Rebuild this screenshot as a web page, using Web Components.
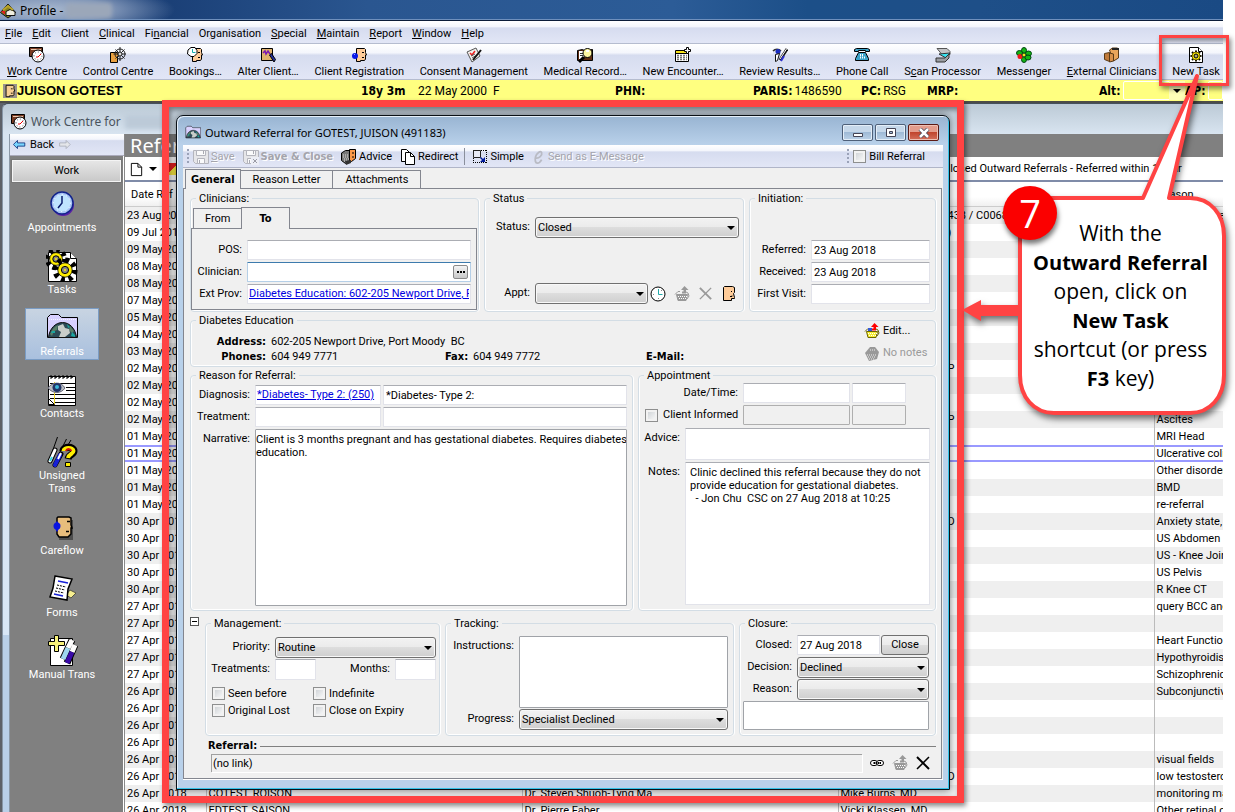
<!DOCTYPE html>
<html lang="en">
<head>
<meta charset="utf-8">
<title>Profile - Outward Referral</title>
<style>
  html, body { height: 100%; margin: 0; }
  body {
    --bold: "DejaVu Sans Condensed", "DejaVu Sans", sans-serif;
    --caption: "Noto Sans", sans-serif;
    --bar: linear-gradient(#fff 0, #f4f6fc 25%, #d6dcef 32%, #e2e6f6 100%);
    --red: #ff4343;
    font: 11px/14px Roboto, sans-serif;
    color: #000;
    background: #fff;
    position: relative;
    overflow: hidden;
  }
</style>
</head>
<body>
<profile-app></profile-app>
<guide-notes></guide-notes>

<script>
const define = (name, markup, setup) => {
  const template = document.createElement('template');
  template.innerHTML = markup;
  customElements.define(name, class extends HTMLElement {
    connectedCallback() {
      if (this.shadowRoot) return;
      const root = this.attachShadow({ mode: 'open' });
      root.append(template.content.cloneNode(true));
      if (setup) setup.call(this, root);
    }
  });
};

/* ---------- icons ---------- */
const face = (x, y, c = '#fc9') =>
  `<g transform="translate(${x} ${y})"><path fill="${c}" stroke="#000" d="M1.5.5h8l1 1v3l1 2.5h-1v4l-1 1.5h-4v1h-4z"/><path stroke="#000" d="M7 4.5h2M7 9.5h2"/></g>`;
const clock = (x, y, r, hand = '#e00') =>
  `<circle cx="${x}" cy="${y}" r="${r}" fill="#fff" stroke="#000"/><path stroke="#556" stroke-dasharray="1 2" fill="none" d="M${x - r + 2} ${y}a${r - 2} ${r - 2} 0 1 1 ${2 * r - 4} 0a${r - 2} ${r - 2} 0 1 1 ${4 - 2 * r} 0"/><path stroke="${hand}" fill="none" d="M${x - 2} ${y + 1}h2l3-3"/>`;
const gear = (x, y, r, c = '#fe0') =>
  `<circle cx="${x}" cy="${y}" r="${r}" fill="none" stroke="#000" stroke-width="${r * .8}" stroke-dasharray="${r * .4} ${r * .385}"/><circle cx="${x}" cy="${y}" r="${r * .8}" fill="${c}" stroke="#000" stroke-width=".8"/><circle cx="${x}" cy="${y}" r="${r * .4}" fill="#888" stroke="#000"/><circle cx="${x}" cy="${y}" r="1" fill="${c}"/>`;
const basket = (body, edge, arrow) =>
  `<path fill="${body}" stroke="${edge}" d="M2.5 8.5h11l-1.5 6h-8z"/><path stroke="${edge}" fill="none" d="M1 8.5l3-3h2M10 5l4 2 1 3-2 3"/><path stroke="#fff" stroke-dasharray="1 1" d="M4 10.5h9M5 12.5h7"/><path fill="${arrow}" d="M10.5 0l4 4h-2.5v3.5h-4v-2h1.5v-1.5h-2.5z"/>`;
const earthFolder = `<path fill="#d8d0ff" stroke="#000" d="M1.5 25.5v-20l3-3h8l3 3h16v20z"/><path fill="#c3bfe8" stroke="#f4f4ff" stroke-dasharray="1 1" d="M3 7.5h27"/><path fill="#2d4a56" stroke="#111" d="M2.5 25.5c1-9 7-15 14-15s13 6 14 15z"/><path fill="#5b8067" d="M4 22c2-5 5-8 8-9l-1 5-3 1-2 5zM24 14l4 5-2 2-3-3z"/><path fill="#c9cdc9" d="M12 14l5-2 2 4 4 1 1 4-5 4h-6l2-5-3-2z"/><path fill="#1aa6a0" d="M21 12l3 3-2 1zM26 20l3 3v2l-4-1zM6 19h3v2h-4z"/>`;
const floppy = `<path fill="#e6e6e9" stroke="#b4b5bd" d="M.5 1.5h15v13h-13l-2-2z"/><path fill="#fafafb" stroke="#b4b5bd" d="M3.5 1.5h9v5h-9zM4.5 9.5h7v5h-7z"/><path stroke="#a9aab2" d="M10.5 2v3M6.5 11v3"/>`;

const icons = {
  app: [16, `<path fill="#8a8420" stroke="#111" d="M.5 9.5L8 1l7.5 8.5L8 15z"/><path fill="#f1efe0" stroke="#111" d="M6 8.5l4-2 5 2v4H6z"/><path fill="#e21c1c" d="M1 8h4v3H4z"/><path stroke="#b9a42a" stroke-width="2" d="M3 7l5-4 5 4"/>`],
  workcentre: [16, `<path fill="#7a3b22" stroke="#000" d="M.5.5h13v9h-13z"/><path stroke="#e8c8b0" d="M2 2.5h10"/>${clock(9, 9, 6)}`],
  control: [16, `<path fill="#e8a040" stroke="#000" d="M.5 5.5h7l1 4h-1v6h-7z"/><path fill="none" stroke="#222" d="M10 2a5 5 0 1 1 0 10a5 5 0 1 1 0-10M10 0v14M3.5 7H16M5.5 2.5l9 9M14.5 2.5l-9 9"/><circle cx="10" cy="7" r="2" fill="#ddd" stroke="#222"/>`],
  bookings: [16, `${face(4, 1)}<path fill="#fff" stroke="#000" d="M1 3l3-2.5h4l2 3v3l-3 3H4L.5 7z"/><path stroke="#18b0b0" fill="none" d="M5.5 2v3.5h3"/>`],
  alter: [16, `<path fill="#deb36c" stroke="#000" d="M1.5 1.5h11v12h-11z"/><path fill="none" stroke="#7a18b0" stroke-width="1.5" d="M3 6l2-2 1 3 2-3 2 3"/><path fill="#24309c" stroke="#000" d="M9.5 8l2-1.5 4 6-1.5 2.5z"/>`],
  register: [16, `${face(4, 1)}<circle cx="4" cy="9" r="3" fill="#0a18e8"/><path fill="#8ca0ff" d="M3 7h1v1H3z"/>`],
  consent: [16, `<path fill="#f2f2ee" stroke="#555" d="M1 5l9-4 4 8-8 6z"/><path stroke="#e22" stroke-width="1.5" fill="none" d="M4 6l2 2 3-4"/><path stroke="#555" d="M6 11l5-3M5 9l4-2"/><path stroke="#111" stroke-width="2" d="M7 13l8-10"/>`],
  record: [16, `<path fill="#5f2c12" stroke="#000" d="M.5 3.5l5-1 2 1 8-1v11h-15z"/><path fill="#fff" d="M2 4h5v8H2z"/><path stroke="#333" d="M3 6.5h3M3 8.5h3"/><circle cx="10.5" cy="6" r="4.5" fill="#fdf6a0" stroke="#000"/><path stroke="#000" stroke-width="3" d="M7 10l-5 5"/><path fill="#fff" d="M9 3h3v2H9z"/>`],
  encounter: [16, `<path fill="#fff" stroke="#000" d="M.5 3.5h13v11h-13z"/><path fill="#f6e21a" d="M1 4h12v2H1z"/><path stroke="#777" stroke-width="1.5" stroke-dasharray="2 1" d="M2 8.5h10M2 10.5h10M2 12.5h10"/><path stroke="#000" d="M1 6.5h12"/><path fill="#fff" stroke="#000" d="M11.5.5h2v2h2v2h-2v2h-2v-2h-2v-2h2z"/>`],
  results: [16, `<path fill="#dfe3f2" d="M1 4h8v4H1z"/><path fill="none" stroke="#333" stroke-width="1.5" d="M1 4c2-2.5 6-2.5 8 0"/><circle cx="6" cy="4.5" r="2.5" fill="#1a2cc0"/><path stroke="#111" stroke-width="3" d="M15 2L8 13"/><path stroke="#fff" d="M14.5 2L8 12"/><path stroke="#2b2fd0" stroke-width="2" d="M9 14l3-5"/><path stroke="#111" fill="#fff" d="M3.5 7.5l4-1-2 7-2 1z"/>`],
  phone: [16, `<path fill="#3ba2c8" stroke="#000" d="M.5 4.5v-2l2-1h11l2 1v2h-4v-1h-7v1z"/><path fill="#3ba2c8" stroke="#000" d="M4.5 5.5h7l3 6v2h-13v-2z"/><path stroke="#fff" stroke-width="2" stroke-dasharray="1 1" d="M6 8h4M6 10.5h5"/>`],
  scanner: [16, `<path fill="#c2c4c6" stroke="#555" d="M2 1.5h10l3 3v3l-8 0z"/><path fill="#37e3f0" stroke="#333" d="M4 7l11-1-4 5z"/><path fill="#9a9da2" stroke="#333" d="M1 11h9l4-4v4l-4 4H1z"/>`],
  messenger: [16, `<g fill="#14b414" stroke="#041"><ellipse cx="8" cy="3.5" rx="2.5" ry="3"/><ellipse cx="8" cy="12.5" rx="2.5" ry="3"/><ellipse cx="12.5" cy="6.5" rx="3" ry="2.5"/><ellipse cx="3.5" cy="6" rx="3" ry="2.5"/><ellipse cx="12" cy="10.5" rx="3" ry="2.5"/></g><circle cx="4" cy="9.5" r="2.5" fill="#f01818"/><circle cx="8" cy="8" r="2" fill="#f7e620" stroke="#041"/>`],
  clinicians: [16, `<path fill="#e9a55b" stroke="#5a3a16" d="M5.5 3l3-2h5l1 2v8l-5 3z"/><path stroke="#222" stroke-width="2" d="M8 2h7"/><path fill="#c07a3a" stroke="#5a3a16" d="M.5 6.5l5-1v9l-5-2z"/><path fill="#d8904a" stroke="#5a3a16" d="M5.5 6l4 1v7l-4 1z"/>`],
  task: [16, `<path fill="#fff" stroke="#000" d="M1.5.5h9l4 4v11h-13z"/><path fill="#fff" stroke="#000" d="M10.5.5v4h4"/><g stroke="#000" stroke-width="1"><path stroke-width="2" d="M8 3.500v11M2.500 9h11M4 5l8 8M12 5l-8 8"/></g><circle cx="8" cy="9" r="4" fill="#fe0" stroke="#776800"/><circle cx="8" cy="9" r="2" fill="#999" stroke="#000"/><path fill="#fe0" d="M7.500 8.500h1v1h-1z"/>`],
  patient: [16, `<path fill="#9a948c" d="M0 0h16v16H0z"/>${face(2, 1, '#f7cf94')}`],
  folder: [32, earthFolder],
  referrals: [32, earthFolder],
  back: [16, `<path fill="#7ad7ff" stroke="#0a2a78" d="M.5 8l5-5v3h9v4h-9v3z"/>`],
  forward: [16, `<path fill="#e4e6ea" stroke="#a9adb6" d="M15 8l-5-5v3H2v4h8v3z"/>`],
  page: [16, `<path fill="#fff" stroke="#000" d="M2.5 1.5h7l4 4v9h-11z"/><path fill="none" stroke="#000" d="M9.5 1.5v4h4"/>`],
  copy: [16, `<path fill="#fff" stroke="#000" d="M1.5.5h5l3 3v9h-8z"/><path fill="#fff" stroke="#000" d="M5.5 3.5h5l4 4v8h-9z"/><path fill="none" stroke="#000" d="M10.5 3.5v4h4"/>`],
  floppy: [16, floppy],
  floppyx: [16, floppy + `<path fill="#eceef6" d="M8 8h8v8H8z"/><path stroke="#9a9ba5" d="M10 10l4 4M14 10l-4 4"/>`],
  advice: [16, `<path fill="#777" stroke="#000" d="M.5 4l4-2.5h4v11l-4 2-4-3z"/><path stroke="#ddd" stroke-dasharray="1 1" d="M2 6h5M2 8h5M3 10h5M3 12h4"/><path fill="#fc9a4a" stroke="#000" d="M8.5.5h6v9l-4 3h-2z"/><path stroke="#000" d="M11 4h2M11 8h2"/><path fill="#333" d="M4 12l6-1v3l-5 2z"/>`],
  simple: [16, `<path fill="none" stroke="#000" stroke-dasharray="1 1" d="M1 1.5h14M14.5 1v13M1.5 1v13M1 13.5h14"/><path fill="#e6e9f5" stroke="#222" d="M1.5 1.5h7v7h-7z"/><path fill="#001a9a" d="M13 8v5H8l2-2-2-2 1-1 2 2z"/>`],
  email: [16, `<path fill="none" stroke="#b9bbc4" stroke-width="2" d="M4 9c4 1 8-3 7-6S5 4 4 8s0 7 2 7 4-2 5-4"/>`],
  schedule: [16, `<circle cx="8" cy="8" r="7" fill="#fff" stroke="#000"/><path fill="none" stroke="#2aa" d="M8.5 3v5.5h4"/><path stroke="#888" d="M3 8.5h1M8.5 12v1M12 4l-1 1"/>`],
  basketgrey: [16, basket('#999', '#999', '#999')],
  basket: [16, basket('#f7ee33', '#6a6400', '#f00') + `<path fill="#3358d8" d="M4 5h4v3H4z"/><path stroke="#f7ee33" stroke-dasharray="1 1" d="M4 11.5h8"/>`],
  notes: [16, `<path fill="#999" d="M1 8l5-6h5l4 5-2 7-8 2z"/><path stroke="#eee" stroke-dasharray="1 1" d="M3 10h9M4 12h8M5 14h6M6 5h5"/>`],
  crossgrey: [16, `<path stroke="#999" stroke-width="2" d="M2 2l12 12"/><path stroke="#999" stroke-width="1.5" d="M14 2L2 14"/>`],
  cross: [16, `<path stroke="#000" stroke-width="2" d="M2 2l12 12"/><path stroke="#000" stroke-width="1.5" d="M14 2L2 14"/>`],
  person: [16, `<path fill="#fc9" stroke="#000" d="M2.5 1.5l1-1h8l2 1v5l-1 1 1 4v1h-3v2h-8z"/><path stroke="#000" d="M10 5.5h1M9 10.5h2v-1"/>`],
  link: [16, `<rect x="1.5" y="5.5" width="7" height="5" rx="2.5" fill="#fff" stroke="#000"/><rect x="7.5" y="5.5" width="7" height="5" rx="2.5" fill="#fff" stroke="#000"/><path stroke="#000" stroke-width="2" d="M4 8h8"/><path stroke="#fff" stroke-dasharray="1 1" d="M4 8h8"/>`],
  appointments: [32, `<circle cx="17" cy="17" r="11" fill="#5a1fa8"/><circle cx="16" cy="15" r="11" fill="#a8c4f4" stroke="#12248c" stroke-width="1.5"/><circle cx="16" cy="15" r="8.5" fill="#bfe4ff" stroke="#fff" stroke-dasharray="1 3.4"/><path stroke="#0a1c6c" fill="none" stroke-width="1.5" d="M16 8v7l-4 5"/>`],
  tasks: [32, `<path fill="#fff" stroke="#000" d="M2.5 2.5h22l6 6v23h-28z"/><path fill="#fff" stroke="#000" d="M24.5 2.5v6h6"/>${gear(10, 9, 8)}${gear(19, 20, 9)}`],
  contacts: [32, `<path fill="#fff" stroke="#000" d="M2.5 2.5h27v29h-27z"/><path stroke="#000" fill="none" stroke-width="1.5" stroke-dasharray="2 2" d="M5 3h24"/><path stroke="#000" fill="none" d="M5 1v4M9 1v4M13 1v4M17 1v4M21 1v4M25 1v4"/><path stroke="#000" d="M4 9.5h25M4 20.5h25M4 24.5h25M9 28.5h20M20 13.5h9M20 16.5h9"/><path stroke="#e8d020" d="M8.5 8v22"/><path fill="#b8bcc0" stroke="#667" d="M2 14c4-6 13-7 17 0-4 6-12 6-17 0z"/><circle cx="11" cy="13.5" r="4.5" fill="#236"/><circle cx="11" cy="13" r="2" fill="#39b6d8"/><path fill="#fff" stroke="#000" d="M2.5 24.5l6 6h-6z"/>`],
  unsigned: [32, `<path stroke="#000" d="M11.5 1l-6 17M20.5 3l-9 18M25 4l-3 5"/><path stroke="#000" stroke-width="5" stroke-linecap="round" d="M9 14l-5 11M15 18l-6 11"/><path stroke="#fff" stroke-width="3" stroke-linecap="round" d="M9 14l-5 11"/><path stroke="#37d8e8" stroke-width="2" d="M6 21l-2 4"/><path stroke="#1620d8" stroke-width="4" stroke-linecap="round" d="M14 19l-5 10"/><path stroke="#fff" stroke-width="2" d="M15 17l-3 6"/><path stroke="#000" stroke-width="7" fill="none" d="M17 15c0-5 11-5 11 0 0 4-5 3-6 8"/><path stroke="#fe0" stroke-width="4" fill="none" d="M17.5 15c0-4 10-4 10 0 0 3-5 3-5.5 7"/><path fill="#fe0" stroke="#000" d="M19.5 26.5h5v4h-5z"/><path stroke="#d81010" stroke-width="2" fill="none" d="M20 15c1-3 5-2 5 0"/>`],
  careflow: [32, `<path fill="#000" opacity=".4" d="M13 9h14v20H13z"/><path fill="#e8bd7c" stroke="#000" stroke-width="1.5" d="M12 6h11l2 1v7l1 3h-1v6l-3 3h-9l-2-3V7z"/><path stroke="#000" stroke-width="1.5" d="M21 10.500h3M20 20.500h3"/><circle cx="11" cy="15" r="3.500" fill="#0a14e0"/><path fill="#0a14e0" d="M11 10l3 4H8zM11 21l3-5H8z"/>`],
  forms: [32, `<path fill="#f6ee90" stroke="#554" d="M20 22l4-5 6 3-5 5z"/><path fill="#fff" stroke="#000" stroke-width="1.5" d="M9 3l17 3-4 10-1 11-17-3 3-9z"/><path stroke="#1620d8" stroke-width="1.5" d="M12 8l10 2M8 21l9 2"/><path stroke="#000" stroke-dasharray="2 1" d="M11 12l9 2M10 15l9 2M9 18l9 2"/>`],
  manual: [32, `<path fill="#fff" stroke="#000" d="M4.5 3.5h22v27h-22z"/><path stroke="#000" stroke-width="7" d="M26 5l-9 19M29 10l-8 18"/><path stroke="#fff" stroke-width="5" d="M26 5l-4 8M29 10l-3 7"/><path stroke="#9fd8f0" stroke-width="5" d="M22 13l-5 11"/><path stroke="#3a0aa8" stroke-width="5" d="M26 17l-5 11"/><path fill="#f8f27a" stroke="#000" d="M8.5.5h4v6h6v4h-6v6h-4v-6h-6v-4h6z"/>`],
  arrow: [8, `<path fill="#000" d="M0 2h8l-4 4z"/>`]
};

define('px-icon', `<style>
  :host { display: inline-block; flex: none; line-height: 0; }
  svg { display: block; fill: none; }
</style>`, function (root) {
  const [box, body] = icons[this.getAttribute('name')];
  const size = this.getAttribute('size') || 16;
  root.innerHTML += `<svg width="${size}" height="${size}" viewBox="0 0 ${box} ${box}" aria-hidden="true">${body}</svg>`;
});

const placeIcon = (spot, name, size) => {
  const icon = document.createElement('px-icon');
  icon.setAttribute('name', name);
  icon.setAttribute('size', size);
  spot.replaceWith(icon);
};

/* ---------- shell of the application ---------- */
define('title-bar', `<style>
  :host { display: flex; align-items: center; box-sizing: border-box; height: 21px; padding: 1px 0 0 20px; position: relative;
    border-bottom: 1px solid #0b1c38; box-shadow: inset 0 -1px #6f90bd;
    font: 12px/16px var(--caption); color: #000;
    background: radial-gradient(ellipse 130px 26px at 45px 10px, #a9b9cf 0, #8196b8 50%, transparent 100%),
      linear-gradient(90deg, #244a86 0, #1b4077 14%, #2a5690 30%, #2c5c97 55%, #1c4f88 66%, #1e4f88 80%, #1a4a84 100%); }
  px-icon { position: absolute; left: 0; top: 3px; }
  i { width: 46px; height: 15px; border-radius: 4px; background: #9ba7b9; filter: blur(2px); }
</style>
<px-icon name="app"></px-icon><span>Profile -&nbsp;</span><i></i>`);

define('menu-bar', `<style>
  :host { display: flex; align-items: center; gap: 10px; box-sizing: border-box; height: 23px; padding: 4px 0 0 5px;
    background: var(--bar); border-bottom: 1px solid #b5bccf; }
  button { all: unset; }
</style>
<button><u>F</u>ile</button><button><u>E</u>dit</button><button>Client</button><button><u>C</u>linical</button><button>Fi<u>n</u>ancial</button><button>Or<u>g</u>anisation</button><button><u>S</u>pecial</button><button><u>M</u>aintain</button><button><u>R</u>eport</button><button><u>W</u>indow</button><button><u>H</u>elp</button>`);

define('tool-button', `<style>
  :host { display: block; flex: none; }
  button { all: unset; display: grid; justify-items: center; gap: 2px; white-space: nowrap; }
</style><button><i></i><span><slot></slot></span></button>`, function (root) {
  placeIcon(root.querySelector('i'), this.getAttribute('icon'), 16);
});

define('tool-bar', `<style>
  :host { display: flex; gap: 12px; box-sizing: border-box; height: 36px; padding: 3px 3px 0 7px; justify-content: space-between;
    background: var(--bar); border-bottom: 1px solid #b5bccf; }
</style>
<tool-button icon="workcentre"><u>W</u>ork Centre</tool-button>
<tool-button icon="control">Control Centre</tool-button>
<tool-button icon="bookings">Bookings…</tool-button>
<tool-button icon="alter">Alter Client…</tool-button>
<tool-button icon="register">Client Registration</tool-button>
<tool-button icon="consent">Consent Management</tool-button>
<tool-button icon="record">Medical Record…</tool-button>
<tool-button icon="encounter">New Encounter…</tool-button>
<tool-button icon="results">Review Results…</tool-button>
<tool-button icon="phone">Phone Call</tool-button>
<tool-button icon="scanner">S<u>c</u>an Processor</tool-button>
<tool-button icon="messenger">Messenger</tool-button>
<tool-button icon="clinicians"><u>E</u>xternal Clinicians</tool-button>
<tool-button icon="task">New Task</tool-button>`);

define('patient-bar', `<style>
  :host { display: grid; height: 21px; align-items: center; padding-left: 3px; white-space: nowrap; overflow: hidden;
    grid-template-columns: minmax(0,358fr) minmax(0,57fr) minmax(0,197fr) minmax(0,138fr) minmax(0,108fr) minmax(0,66fr) minmax(0,172fr) minmax(0,86fr) minmax(0,38fr);
    background: #ffff80; border-bottom: 2px solid #4c4c48; font-size: 12px; }
  b { font-family: var(--bold); font-size: 12px; }
  strong { font: bold 13px/16px "Liberation Sans", sans-serif; }
  span { display: flex; align-items: center; gap: 2px; }
  .name { gap: 0; }
  label { font: bold 12px/14px var(--bold); }
  select { appearance: none; flex: 1; min-width: 0; height: 19px; border: 1px solid #fff; border-radius: 2px; background: #ffff80; margin: 0; padding: 0; }
  .drop { position: relative; flex: 1; display: flex; }
  .drop px-icon { position: absolute; right: 0; top: 0; padding: 6px 4px 5px; background: #ffffb8; pointer-events: none; }
</style>
<span class="name"><px-icon name="patient" size="14"></px-icon><strong>JUISON GOTEST</strong></span>
<b>18y 3m</b><span>22 May 2000 &nbsp;F</span><b>PHN:</b>
<span><b>PARIS:</b>1486590</span><span><b>PC:</b>RSG</span><b>MRP:</b>
<span><label for="alt">Alt:</label><div class="drop"><select id="alt"></select><px-icon name="arrow" size="8"></px-icon></div></span>
<span><label for="ap">AP:</label><select id="ap"></select></span>`);

/* ---------- work centre ---------- */
define('nav-item', `<style>
  :host { display: block; margin-bottom: 10px; }
  a { display: flex; flex-direction: column; align-items: center; width: 74px; box-sizing: border-box; padding: 2px 0 1px;
    border: 1px solid transparent; color: #fff; line-height: 13px; text-align: center; text-decoration: none; }
  px-icon { padding: 1px 0; }
  :host([selected]) a { border: 1px dotted #234; outline: 1px solid #7a9cc4; outline-offset: -1px;
    background: linear-gradient(#c8d4e2, #a9c0de); }
</style><a href="#"><i></i><span><slot></slot></span></a>`, function (root) {
  placeIcon(root.querySelector('i'), this.getAttribute('icon'), 32);
});

define('side-nav', `<style>
  :host { display: flex; flex-direction: column; border-left: 1px solid #8b98a6; }
  header { display: flex; align-items: center; gap: 4px; height: 21px; padding-left: 3px; background: var(--bar); border-bottom: 1px solid #aab; }
  header button { all: unset; display: flex; align-items: center; gap: 3px; }
  px-icon { margin-right: 1px; }
  nav { flex: 1; background: #808080; display: flex; flex-direction: column; align-items: center; border-right: 1px solid #fff; padding-right: 9px; }
  .work { appearance: none; align-self: stretch; margin: 3px -8px 1px 1px; height: 24px; border: 2px solid #f4f4f4; outline: 1px solid #777; outline-offset: -1px; background: linear-gradient(#e6e6e6, #c9c9c9); font: inherit; padding: 0; }
</style>
<header><button><px-icon name="back" size="13"></px-icon>Back</button><button aria-label="Forward"><px-icon name="forward" size="13"></px-icon></button></header>
<nav>
  <button class="work">Work</button>
  <nav-item icon="appointments">Appointments</nav-item>
  <nav-item icon="tasks">Tasks</nav-item>
  <nav-item icon="referrals" selected>Referrals</nav-item>
  <nav-item icon="contacts">Contacts</nav-item>
  <nav-item icon="unsigned">Unsigned<br>Trans</nav-item>
  <nav-item icon="careflow">Careflow</nav-item>
  <nav-item icon="forms">Forms</nav-item>
  <nav-item icon="manual">Manual Trans</nav-item>
</nav>`);

define('referral-list', `<style>
  :host { display: block; min-width: 0; background: #fff; border-left: 1px solid #888; overflow: hidden; }
  h1 { margin: 0; height: 23px; padding-left: 5px; background: #808080; color: #fff; font: 20px/24px var(--caption); }
  .tools { display: flex; align-items: center; gap: 8px; height: 22px; padding-left: 4px; margin-top: 1px; border-bottom: 2px solid #7f8ba8; white-space: nowrap; }
  .filter { margin-left: 758px; }
  .tools button { all: unset; display: flex; align-items: center; gap: 5px; }
  .flag { width: 12px; height: 12px; background: linear-gradient(135deg, #33c 25%, #e22 25% 55%, #fe4 55%); }
  table { width: 100%; table-layout: fixed; border-collapse: collapse; }
  col.d { width: 81px; } col.n { width: 316px; }
  th { height: 25px; padding: 0 0 0 6px; font-weight: normal; text-align: left; background: linear-gradient(#fff 60%, #eee); box-shadow: inset 0 -1px #ccc; }
  th:last-child { padding-left: 3px; }
  td { height: 17px; padding: 0 0 0 2px; line-height: 17px; white-space: nowrap; overflow: hidden; border-right: 1px solid #bbb; }
  td:last-child { border-right: 0; }
  tbody tr:nth-child(odd) { background: #efefef; }
  tr.current { background: #fff !important; box-shadow: inset 0 2px #9999ff, inset 0 -2px #9999ff; }
  .tail { display: block; padding-left: 107px; }
</style>
<h1>Referrals</h1>
<div class="tools">
  <button aria-label="New"><px-icon name="page" size="15"></px-icon><px-icon name="arrow" size="8"></px-icon></button><span class="flag"></span>
  <span class="filter">Closed Outward Referrals - Referred within 1 year</span>
</div>
<table>
  <colgroup><col class="d"><col class="n"><col class="n"><col class="n"><col></colgroup>
  <thead><tr><th>Date Ref</th><th></th><th></th><th></th><th>Reason</th></tr></thead>
  <tbody></tbody>
</table>`, function (root) {
  const rows = [
    ['23 Aug 2018', '', '', '438 / C0068', 'Cardiac Surgery'], ['09 Jul 2018', '', '', ')'], ['09 May 2018'], ['08 May 2018'], ['08 May 2018'],
    ['07 May 2018'], ['05 May 2018'], ['04 May 2018'], ['03 May 2018'], ['02 May 2018', '', '', 'P'], ['02 May 2018'],
    ['02 May 2018'], ['02 May 2018', '', '', 'P', 'Ascites'], ['01 May 2018', '', '', '', 'MRI Head'],
    ['01 May 2018', '', '', '', 'Ulcerative colitis'], ['01 May 2018', '', '', '', 'Other disorders'], ['01 May 2018', '', '', '', 'BMD'],
    ['01 May 2018', '', '', '', 're-referral'], ['30 Apr 2018', '', '', 'D', 'Anxiety state,'], ['30 Apr 2018', '', '', '', 'US Abdomen'],
    ['30 Apr 2018', '', '', '', 'US - Knee Joint'], ['30 Apr 2018', '', '', '', 'US Pelvis'], ['30 Apr 2018', '', '', '', 'R Knee CT'],
    ['27 Apr 2018', '', '', '', 'query BCC and'], ['27 Apr 2018'], ['27 Apr 2018', '', '', '', 'Heart Function'],
    ['27 Apr 2018', '', '', '', 'Hypothyroidism'], ['27 Apr 2018', '', '', '', 'Schizophrenic'], ['26 Apr 2018', '', '', '', 'Subconjunctival'],
    ['26 Apr 2018'], ['26 Apr 2018'], ['26 Apr 2018'], ['26 Apr 2018', '', '', '', 'visual fields'],
    ['26 Apr 2018', '', '', 'D', 'low testosterone'],
    ['26 Apr 2018', 'COTEST, ROISON', 'Dr. Steven Shuoh-Tyng Ma', 'Mike Burns, MD', 'monitoring ma'],
    ['26 Apr 2018', 'EDTEST, SAISON', 'Dr. Pierre Faber', 'Vicki Klassen, MD', 'Other retinal c']
  ];
  const body = root.querySelector('tbody');
  rows.forEach((row, index) => {
    const tr = body.insertRow();
    if (index === 14) tr.className = 'current';
    for (let c = 0; c < 5; c++) {
      const td = tr.insertCell();
      if (c === 3 && row[3] && !row[3].endsWith('MD')) {
        const tail = document.createElement('span');
        tail.className = 'tail';
        tail.textContent = row[3];
        td.append(tail);
      } else td.textContent = row[c] || '';
    }
  });
});

define('work-centre', `<style>
  :host { display: grid; grid-template: 30px minmax(0, 1fr) / 115px minmax(0, 1fr); flex: 1; min-height: 0;
    margin-left: 2px; border-top: 1px solid #45505c; border-left: 1px solid #8796a6; border-radius: 6px 0 0 0; padding-left: 6px; overflow: hidden;
    background: linear-gradient(#bccad6 0, #d8e4f0 30px, #d8e6f6 75%, #b9cfe8 75%); }
  header { grid-column: 1 / -1; display: flex; align-items: center; gap: 4px; padding: 6px 0 0 2px; font: 12px/16px var(--caption); color: #4a545e; }
  i { width: 44px; height: 14px; background: #bccad8; filter: blur(2px); }
</style>
<header><px-icon name="workcentre"></px-icon><span>Work Centre for</span><i></i></header>
<side-nav></side-nav><referral-list></referral-list>`);

/* ---------- referral window ---------- */
define('group-box', `<style>
  :host { display: grid; min-width: 0; }
  fieldset { min-width: 0; margin: 0; padding: 0; border: 1px solid #d3dde5; border-radius: 4px; box-shadow: inset 1px 0 #fff, inset 0 -1px #fff, 1px 0 #fff; }
  legend { margin-left: 5px; padding: 2px 3px 0; line-height: 12px; }
</style><fieldset><legend></legend><slot></slot></fieldset>`, function (root) {
  root.querySelector('legend').textContent = this.getAttribute('caption');
});

define('referral-window', `<style>
  :host { display: block; box-sizing: border-box; border: 1px solid #0b1118; border-radius: 7px 7px 0 0; padding: 0 6px 9px;
    background: linear-gradient(#98b4d2, #b9d1ea 29px); box-shadow: inset -1px -1px #35c3e8, inset 1px 1px #e6f0fa, 0 0 8px #0008; }
  * { box-sizing: border-box; }
  header { display: flex; align-items: center; height: 29px; padding: 4px 4px 0 2px; gap: 4px; font: 11px/16px var(--caption); }
  header span { flex: 1; }
  header button { width: 31px; height: 17px; margin-left: -2px; padding: 0; display: grid; place-items: center; border: 1px solid #4e6079; border-radius: 2px; background: linear-gradient(#c6d8ea 45%, #9fbad6 50%, #bcd2e8); box-shadow: inset 0 0 0 1px #e4eef8; }
  header button.x { background: linear-gradient(#e39c8c 45%, #c1452e 50%, #d3705c); border-color: #5c1a14; box-shadow: inset 0 0 0 1px #eec0b4; }
  .client { background: #f0f0f0; padding-right: 1px; border-bottom: 1px solid #fff; }
  .tools { display: flex; align-items: center; height: 23px; margin-right: -1px; padding: 1px 18px 0 4px; background: var(--bar); border-bottom: 1px solid #b0b5c8; white-space: nowrap; }
  .tools button { all: unset; display: flex; align-items: center; gap: 2px; margin-right: 8px; }
  .tools button:disabled { color: #a4a4ac; text-shadow: 1px 1px #fff; }
  .tools b { font-family: var(--bold); }
  .grip { width: 2px; height: 16px; margin-right: 4px; background: repeating-linear-gradient(#9aa2b8 0 2px, transparent 2px 4px); }
  .sep { width: 1px; height: 17px; margin: 0 7px 0 -2px; background: #8a8f9c; }
  .push { margin-left: auto; }
  .check { display: flex; align-items: center; gap: 3px; white-space: nowrap; }
  .check input { appearance: none; width: 13px; height: 13px; margin: 0; border: 1px solid #8e8f8f; background: linear-gradient(135deg, #c8ccd0, #fff); box-shadow: inset 0 0 0 2px #f2f2f2; }
  .tabs { display: flex; align-items: flex-end; }
  .tabs button { height: 18px; margin: 0 0 0 -1px; padding: 0 11px; border: 1px solid #83868f; border-bottom: 0; background: #f0f0f0; font: inherit; }
  .tabs .on { height: 21px; margin-bottom: -1px; font: bold 11px/14px var(--bold); position: relative; }
  .main { height: 20px; padding-left: 3px; }
  .main button { padding: 0 12px; }
  .main .on { padding: 0 5px; height: 20px; }
  .pane { border: 1px solid #83868f; padding: 2px 5px 6px 6px; }
  .row { display: grid; gap: 5px; }
  .r1 { grid-template-columns: minmax(0, 1fr) 260px 187px; height: 121px; margin-bottom: 1px; }
  .r2 { height: 54px; margin-bottom: 1px; }
  .r3 { grid-template-columns: minmax(0, 1fr) 298px; height: 243px; margin-bottom: 5px; }
  .r4 { grid-template-columns: 10px 235px minmax(0, 1fr) 197px; height: 120px; margin-bottom: 3px; }
  label, .lab { text-align: right; line-height: 20px; white-space: nowrap; }
  input:not([type=checkbox]), textarea, .linkbox { width: 100%; min-width: 0; margin: 0; border: 1px solid #e2e3ea; border-top-color: #abadb3; border-radius: 1px; background: #fff; font: inherit; color: #000; }
  input:not([type=checkbox]), .linkbox { height: 20px; padding: 0 2px; }
  input:disabled:not([type=checkbox]) { background: #f0f0f0; border-color: #afafaf; }
  textarea { display: block; resize: none; overflow: hidden; line-height: 13px; padding: 3px 4px; }
  textarea.dark { border-color: #a0a3a8; padding: 3px 0; }
  .linkbox { line-height: 18px; padding: 0 1px; white-space: nowrap; overflow: hidden; }
  .linkbox a { display: block; overflow: hidden; color: #0000e0; }
  .pick { position: relative; }
  .pick input { border: 1px solid #b5cfe7; border-top-color: #3d7bad; }
  .pick button { position: absolute; right: 3px; top: 3px; width: 15px; height: 14px; padding: 0; border: 1px solid #8a8a8a; border-radius: 2px; background: linear-gradient(#f4f4f4, #c8c8c8); display: grid; place-items: center; }
  .pick button::before { content: ""; width: 8px; height: 2px; background: repeating-linear-gradient(90deg, #000 0 2px, transparent 2px 3px); }
  .drop { position: relative; display: block; }
  select { appearance: none; display: block; width: 100%; height: 21px; margin: 0; padding: 0 2px; border: 1px solid #707070; border-radius: 3px; background: linear-gradient(#f2f2f2, #ebebeb 48%, #ddd 50%, #cfcfcf); box-shadow: inset 0 0 0 1px #f8f8f8; font: inherit; color: #000; }
  .drop px-icon { position: absolute; right: 4px; top: 7px; pointer-events: none; }
  .act { all: unset; display: flex; align-items: center; gap: 3px; height: 16px; }
  .f { display: grid; align-content: start; gap: 2px 5px; }
  .subtabs { height: 23px; padding-left: 3px; }
  .subtabs .on { padding: 0 17px; height: 22px; }
  .subtabs button { height: 20px; }
  .sub { margin: 0 1px 0 0; border: 1px solid #83868f; padding: 11px 5px 5px 0; grid-template-columns: 50px minmax(0, 1fr); }
  .status { padding: 12px 4px 0 0; grid-template-columns: 45px minmax(0, 1fr); row-gap: 45px; }
  .appt { display: flex; align-items: center; gap: 8px; }
  .appt .drop { width: 113px; margin-right: -6px; }
  .init { padding: 35px 5px 0 0; grid-template-columns: 56px minmax(0, 1fr); }
  .prov { display: flex; }
  .prov dl { flex: 1; margin: 0; padding-top: 7px; display: grid; grid-template: 15px 15px / 75px 169px 23px 168px auto 1fr; column-gap: 5px; line-height: 15px; white-space: nowrap; }
  dt { font: bold 11px/15px var(--bold); text-align: right; }
  dd { margin: 0; } .wide { grid-column: 2 / -1; }
  .prov aside { display: grid; gap: 6px; width: 71px; margin-top: -4px; align-content: start; }
  .off { color: #9a9a9a; }
  .reason { padding: 3px 5px 0 0; grid-template-columns: 62px 126px minmax(0, 1fr); column-gap: 2px; }
  .reason label, .reason .lab { padding-right: 3px; }
  .span2 { grid-column: span 2; }
  .when { padding: 1px 5px 0 0; grid-template-columns: 102px 107px 54px; column-gap: 2px; }
  .when > label:first-child { padding-right: 3px; }
  .when .check { padding-left: 6px; gap: 5px; }
  .memo { padding: 3px 5px 0 0; grid-template-columns: 41px minmax(0, 1fr); }
  .fold { all: unset; width: 9px; height: 9px; margin-top: 1px; border: 1px solid #555; background: linear-gradient(#000 0 0) center / 5px 1px no-repeat #fff; box-sizing: border-box; }
  .manage { padding: 7px 3px 0 0; row-gap: 1px; grid-template-columns: 64px 41px minmax(0, 1fr) 41px; }
  .manage .drop { grid-column: span 3; }
  .manage input { height: 21px; }
  .ticks { display: grid; grid-template: 17px 17px / 101px auto; padding: 5px 0 0 6px; justify-content: start; }
  .track { padding: 6px 5px 0 0; row-gap: 1px; grid-template-columns: 68px minmax(0, 1fr); }
  .close { padding: 5px 6px 0 0; row-gap: 1px; grid-template-columns: 52px minmax(0, 1fr); }
  .closed { display: flex; gap: 1px; height: 21px; }
  .closed button { flex: none; width: 48px; height: 20px; padding: 0; border: 1px solid #707070; border-radius: 3px; background: linear-gradient(#f2f2f2, #ebebeb 48%, #ddd 50%, #cfcfcf); font: inherit; }
  .close textarea { grid-column: 1 / -1; width: auto; margin-left: 3px; height: 29px; }
  h2 { display: flex; align-items: center; gap: 3px; margin: 0 0 1px 18px; font: bold 11px/14px var(--bold); }
  h2::after { content: ""; flex: 1; height: 1px; background: #808080; }
  .link { display: flex; align-items: center; gap: 7px; padding: 0 5px 0 21px; }
  .link output { flex: 1; height: 18px; border: solid #a0a0a0; border-width: 1px 0 0 1px; box-shadow: 1px 1px #fff; padding-left: 1px; line-height: 17px; }
  .h177 { height: 177px; } .h143 { height: 143px; } .h72 { height: 72px; } .h32 { height: 32px; }
</style>
<header><px-icon name="folder"></px-icon><span>Outward Referral for GOTEST, JUISON (491183)</span>
  <button aria-label="Minimise"><svg width="12" height="8"><path fill="#fff" stroke="#445" d="M1.5 4.5h9v3h-9z"/></svg></button>
  <button aria-label="Restore"><svg width="12" height="10"><path fill="#fff" stroke="#445" d="M1.5.5h9v8h-9z"/><path fill="#9fbad6" stroke="#445" d="M4.5 3.5h3v2h-3z"/></svg></button>
  <button class="x" aria-label="Close window"><svg width="12" height="10"><path stroke="#445" stroke-width="4" d="M2 1l8 8M10 1l-8 8"/><path stroke="#fff" stroke-width="2.5" d="M2 1l8 8M10 1l-8 8"/></svg></button>
</header>
<form class="client">
  <div class="tools">
    <i class="grip"></i>
    <button type="button" disabled><px-icon name="floppy"></px-icon><span><u>S</u>ave</span></button>
    <button type="button" disabled><px-icon name="floppyx"></px-icon><b>Save &amp; Close</b></button>
    <button type="button"><px-icon name="advice"></px-icon>Advice</button>
    <button type="button"><px-icon name="copy"></px-icon>Redirect</button><i class="sep"></i>
    <button type="button"><px-icon name="simple"></px-icon>Simple</button>
    <button type="button" disabled><px-icon name="email" size="14"></px-icon>Send as E-Message</button>
    <i class="grip push"></i>
    <label class="check"><input type="checkbox">Bill Referral</label>
  </div>
  <div class="tabs main"><button type="button" class="on">General</button><button type="button">Reason Letter</button><button type="button">Attachments</button></div>
  <div class="pane">
    <div class="row r1">
      <group-box caption="Clinicians:">
        <div class="tabs subtabs"><button type="button">From</button><button type="button" class="on">To</button></div>
        <div class="f sub">
          <label for="pos">POS:</label><input id="pos">
          <label for="clinician">Clinician:</label><div class="pick"><input id="clinician"><button type="button" aria-label="Choose clinician"></button></div>
          <span class="lab">Ext Prov:</span><div class="linkbox"><a href="#">Diabetes Education: 602-205 Newport Drive, Port Moody</a></div>
        </div>
      </group-box>
      <group-box caption="Status">
        <div class="f status">
          <label for="status">Status:</label><div class="drop"><select id="status"><option>Closed</option></select><px-icon name="arrow" size="8"></px-icon></div>
          <label for="appt">Appt:</label><div class="appt"><div class="drop"><select id="appt"><option></option></select><px-icon name="arrow" size="8"></px-icon></div>
            <button type="button" class="act" aria-label="Schedule"><px-icon name="schedule"></px-icon></button><button type="button" class="act" aria-label="Open appointment"><px-icon name="basketgrey"></px-icon></button><button type="button" class="act" aria-label="Remove appointment"><px-icon name="crossgrey" size="15"></px-icon></button><button type="button" class="act" aria-label="Client"><px-icon name="person"></px-icon></button></div>
        </div>
      </group-box>
      <group-box caption="Initiation:">
        <div class="f init">
          <label for="referred">Referred:</label><input id="referred" value="23 Aug 2018">
          <label for="received">Received:</label><input id="received" value="23 Aug 2018">
          <label for="first">First Visit:</label><input id="first">
        </div>
      </group-box>
    </div>
    <div class="row r2">
      <group-box caption="Diabetes Education">
        <div class="prov">
          <dl><dt>Address:</dt><dd class="wide">602-205 Newport Drive, Port Moody &nbsp;BC</dd>
            <dt>Phones:</dt><dd>604 949 7771</dd><dt>Fax:</dt><dd>604 949 7772</dd><dt>E-Mail:</dt><dd></dd></dl>
          <aside><button type="button" class="act"><px-icon name="basket"></px-icon>Edit...</button><button type="button" class="act off"><px-icon name="notes"></px-icon>No notes</button></aside>
        </div>
      </group-box>
    </div>
    <div class="row r3">
      <group-box caption="Reason for Referral:">
        <div class="f reason">
          <span class="lab">Diagnosis:</span><div class="linkbox"><a href="#">*Diabetes- Type 2: (250)</a></div><input aria-label="Diagnosis text" value="*Diabetes- Type 2:">
          <label for="treatment">Treatment:</label><input id="treatment"><input aria-label="Treatment text">
          <label for="narrative">Narrative:</label><textarea id="narrative" class="dark span2 h177" wrap="off">Client is 3 months pregnant and has gestational diabetes. Requires diabetes
education.</textarea>
        </div>
      </group-box>
      <group-box caption="Appointment">
        <div class="f when">
          <label for="date">Date/Time:</label><input id="date"><input aria-label="Time">
          <label class="check"><input type="checkbox">Client Informed</label><input disabled aria-label="Informed date"><input disabled aria-label="Informed time">
        </div>
        <div class="f memo">
          <label for="advice">Advice:</label><textarea id="advice" class="h32"></textarea>
          <label for="notes">Notes:</label><textarea id="notes" class="h143">Clinic declined this referral because they do not
provide education for gestational diabetes.
  - Jon Chu  CSC on 27 Aug 2018 at 10:25</textarea>
        </div>
      </group-box>
    </div>
    <div class="row r4">
      <button type="button" class="fold" aria-label="Collapse"></button>
      <group-box caption="Management:">
        <div class="f manage">
          <label for="priority">Priority:</label><div class="drop"><select id="priority"><option>Routine</option></select><px-icon name="arrow" size="8"></px-icon></div>
          <label for="treatments">Treatments:</label><input id="treatments"><label for="months">Months:</label><input id="months">
        </div>
        <div class="ticks">
          <label class="check"><input type="checkbox">Seen before</label><label class="check"><input type="checkbox">Indefinite</label>
          <label class="check"><input type="checkbox">Original Lost</label><label class="check"><input type="checkbox">Close on Expiry</label>
        </div>
      </group-box>
      <group-box caption="Tracking:">
        <div class="f track">
          <label for="instructions">Instructions:</label><textarea id="instructions" class="dark h72"></textarea>
          <label for="progress">Progress:</label><div class="drop"><select id="progress"><option>Specialist Declined</option></select><px-icon name="arrow" size="8"></px-icon></div>
        </div>
      </group-box>
      <group-box caption="Closure:">
        <div class="f close">
          <label for="closed">Closed:</label><div class="closed"><input id="closed" value="27 Aug 2018"><button type="button">Close</button></div>
          <label for="decision">Decision:</label><div class="drop"><select id="decision"><option>Declined</option></select><px-icon name="arrow" size="8"></px-icon></div>
          <label for="why">Reason:</label><div class="drop"><select id="why"><option></option></select><px-icon name="arrow" size="8"></px-icon></div>
          <textarea class="dark" aria-label="Closure note"></textarea>
        </div>
      </group-box>
    </div>
    <h2>Referral:</h2>
    <div class="link"><output>(no link)</output>
      <button type="button" class="act" aria-label="Link"><px-icon name="link"></px-icon></button><button type="button" class="act" aria-label="Open"><px-icon name="basketgrey"></px-icon></button><button type="button" class="act" aria-label="Unlink"><px-icon name="cross"></px-icon></button></div>
  </div>
</form>`);

define('profile-app', `<style>
  :host { display: flex; flex-direction: column; height: 100%; margin-right: 12px; overflow: hidden; background: #5d6168; }
  referral-window { position: absolute; left: 176px; right: 285px; top: 115px; }
</style>
<title-bar></title-bar><menu-bar></menu-bar><tool-bar></tool-bar><patient-bar></patient-bar>
<work-centre></work-centre>
<referral-window></referral-window>`);

/* ---------- numbered guide drawn over the application ---------- */
define('guide-notes', `<style>
  :host { position: absolute; inset: 0; pointer-events: none; overflow: hidden; }
  * { box-sizing: border-box; }
  .frame { position: absolute; left: 162px; right: 271px; top: 100px; height: 703px; border: 7px solid var(--red); box-shadow: 2px 3px 5px #0007, inset 2px 3px 5px #0006; }
  .target { position: absolute; right: 6px; top: 35px; width: 70px; height: 51px; border: 3px solid var(--red); box-shadow: 2px 3px 5px #0007, inset 2px 3px 5px #0006; }
  svg { position: absolute; right: 0; top: 70px; filter: drop-shadow(2px 4px 3px #0008); }
  p { position: absolute; right: 9px; top: 219px; width: 211px; margin: 0; text-align: center; font: 21px/29px "Open Sans", sans-serif; }
  b { font-size: 20px; }
  .step { position: absolute; right: 178px; top: 186px; width: 54px; height: 54px; border-radius: 50%; background: #fb0000; color: #fff;
    display: grid; place-items: center; font: 38px/54px "Open Sans", sans-serif; box-shadow: 1px 4px 5px #0008; }
</style>
<div class="frame"></div><div class="target"></div>
<svg width="280" height="360" aria-hidden="true">
  <path fill="#ff4343" d="M7 240l19-10v5h42v11H26v5z"/>
  <path fill="#fff" stroke="#ff4343" stroke-width="4" stroke-linejoin="round" d="M89 128h99l54-122-28 122h21c20 0 34 16 34 38v139c0 22-14 38-34 38H99c-20 0-34-16-34-38V160c0-20 12-32 24-32z"/>
</svg>
<p>With the<br><b>Outward Referral</b><br>open, click on<br><b>New Task</b><br>shortcut (or press<br><b>F3</b> key)</p>
<div class="step">7</div>`);
</script>
</body>
</html>
